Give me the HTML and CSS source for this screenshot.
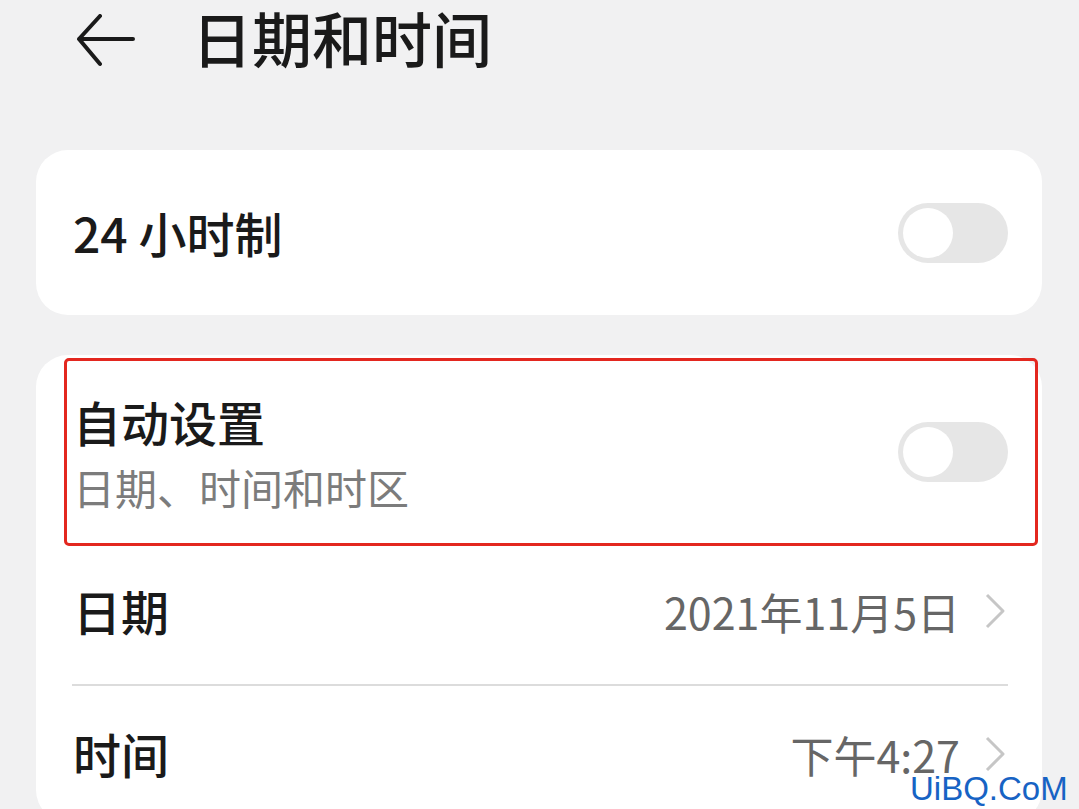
FILE: index.html
```html
<!DOCTYPE html>
<html lang="zh-CN">
<head>
  <meta charset="UTF-8" />
  <title>日期和时间</title>
  <link rel="stylesheet" href="styles.css">
</head>
<body>
  <div class="header">
    <svg class="back" width="60" height="56" viewBox="0 0 60 56">
      <path d="M24 2 L3 25 L24 50 M3 25 L57 25" fill="none" stroke="#1a1a1a" stroke-width="4" stroke-linecap="round" stroke-linejoin="round"/>
    </svg>
    <h1>日期和时间</h1>
  </div>

  <div class="card card-single">
    <div class="row">
      <span class="label">24 小时制</span>
      <div class="switch"><div class="knob"></div></div>
    </div>
  </div>

  <div class="card">
    <div class="row row-auto marked">
      <div class="text">
        <span class="label">自动设置</span>
        <span class="sub">日期、时间和时区</span>
      </div>
      <div class="switch"><div class="knob"></div></div>
    </div>
    <div class="row row-link row-date">
      <span class="label">日期</span>
      <div class="value">
        <span>2021年11月5日</span>
        <svg width="22" height="36" viewBox="0 0 22 36"><path d="M3 2 L19 18 L3 34" fill="none" stroke="#c6c6c6" stroke-width="3" stroke-linejoin="round"/></svg>
      </div>
    </div>
    <div class="divider"></div>
    <div class="row row-link">
      <span class="label">时间</span>
      <div class="value">
        <span>下午4:27</span>
        <svg width="22" height="36" viewBox="0 0 22 36"><path d="M3 2 L19 18 L3 34" fill="none" stroke="#c6c6c6" stroke-width="3" stroke-linejoin="round"/></svg>
      </div>
    </div>
  </div>

  <div class="watermark">UiBQ.CoM</div>
</body>
</html>
```

FILE: styles.css
```css
body {
  margin: 0;
  height: 809px;
  overflow: hidden;
  background: #f1f1f2;
  font-family: "Noto Sans CJK SC", "Noto Sans", sans-serif;
  color: #1a1a1a;
  position: relative;
}
.header {
  height: 86px;
  box-sizing: border-box;
  display: flex;
  align-items: flex-start;
  padding: 4px 0 0 76px;
  gap: 56px;
}
.back {
  margin-top: 10px;
}
.header h1 {
  margin: 0;
  font-size: 60px;
  font-weight: 500;
  line-height: 1.1;
}
.card {
  background: #fff;
  margin: 40px 37px 0 36px;
  border-radius: 32px;
}
.card-single {
  margin-top: 64px;
  height: 165px;
  display: flex;
  align-items: center;
}
.card-single .row {
  flex: 1;
}
.row {
  display: flex;
  align-items: center;
  justify-content: space-between;
  padding: 0 34px 0 37px;
  position: relative;
}
.label {
  font-size: 48px;
  font-weight: 500;
  line-height: 1.2;
}
.row-auto {
  height: 193px;
}
.text {
  display: flex;
  flex-direction: column;
  gap: 11px;
  padding-top: 2px;
}
.sub {
  font-size: 42px;
  color: #7c7c7c;
  line-height: 1.2;
}
.marked::after {
  content: "";
  position: absolute;
  left: 28px;
  right: 4px;
  top: 3px;
  bottom: 2px;
  border: 3px solid #e3271f;
  border-radius: 5px;
}
.switch {
  width: 110px;
  height: 60px;
  border-radius: 30px;
  background: #e6e6e6;
  position: relative;
}
.knob {
  position: absolute;
  left: 5px;
  top: 5px;
  width: 50px;
  height: 50px;
  border-radius: 50%;
  background: #fff;
}
.row-link {
  height: 136px;
}
.row-date {
  box-sizing: border-box;
  padding-bottom: 10px;
}
.value {
  display: flex;
  align-items: center;
  gap: 24px;
  font-size: 43px;
  color: #666;
  margin-right: 2px;
}
.divider {
  height: 2px;
  background: #dcdcdc;
  margin: 0 34px 0 36px;
}
.watermark {
  position: absolute;
  left: 910px;
  top: 770px;
  font-family: "Liberation Sans", Arial, sans-serif;
  font-size: 33px;
  color: #1763c4;
}
```
